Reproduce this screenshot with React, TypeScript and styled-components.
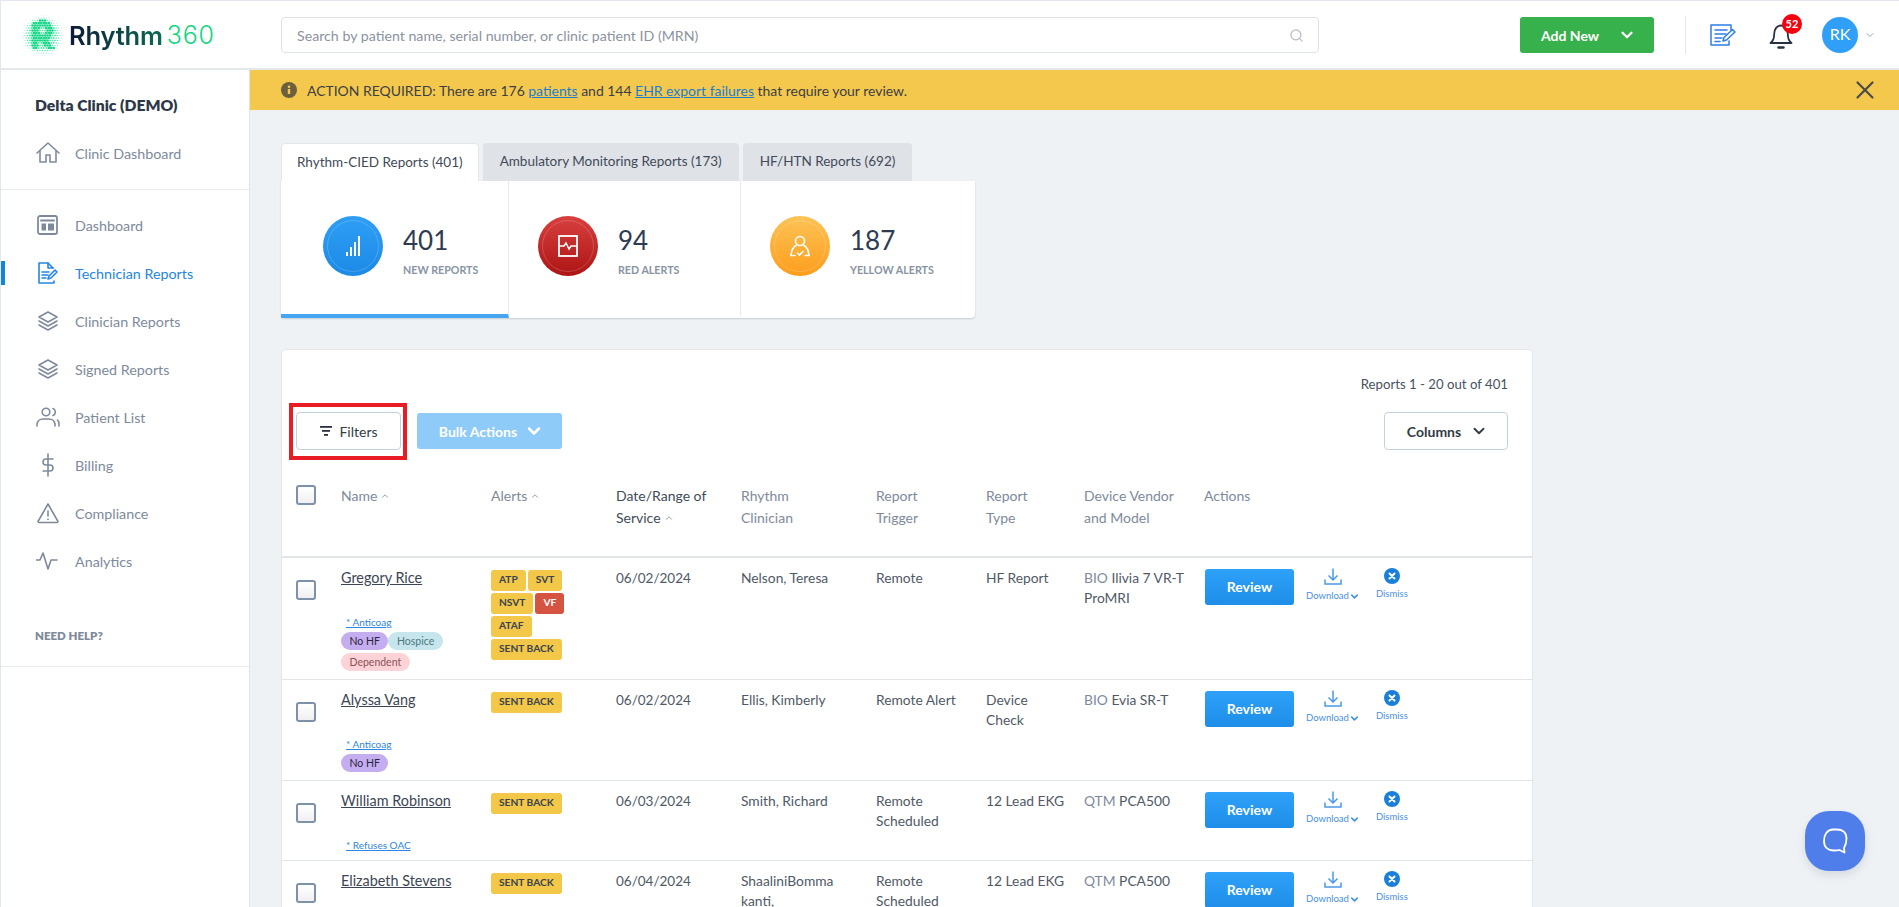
import React from "react";
import styled, { createGlobalStyle } from "styled-components";
import { Search, ChevronDown, ChevronUp, X } from "lucide-react";

const GlobalStyle = createGlobalStyle`
  html, body {
    margin: 0;
    height: 907px;
    overflow: hidden;
    background: #eff2f5;
    font-family: "Lato", "Liberation Sans", sans-serif;
    color: #3a4657;
  }
  * { box-sizing: border-box; }
`;

const Page = styled.div`
  display: flex;
  flex-direction: column;
  height: 907px;
  border-top: 1px solid #e2e6ee;
  border-left: 1px solid #e2e6ee;
`;

const TopBar = styled.header`
  flex: 0 0 69px;
  display: flex;
  align-items: center;
  background: #fff;
  border-bottom: 2px solid #e4e7ec;
  padding-top: 1px;
`;

const Brand = styled.div`
  width: 280px;
  padding-left: 21px;
  display: flex;
  align-items: center;
`;

const Wordmark = styled.span`
  margin-left: 6px;
  font-family: "Inter", sans-serif;
  font-size: 25.5px;
  letter-spacing: -0.2px;
  font-weight: 600;
  background: linear-gradient(90deg, #0c1a38, #0b6b52);
  -webkit-background-clip: text;
  background-clip: text;
  color: transparent;
`;

const WordmarkNum = styled.span`
  margin-left: 4px;
  font-family: "Inter", sans-serif;
  font-size: 25px;
  letter-spacing: 0.8px;
  font-weight: 300;
  color: #10d67f;
`;

const SearchBox = styled.div`
  width: 1038px;
  height: 36px;
  display: flex;
  align-items: center;
  justify-content: space-between;
  padding: 0 14px 0 15px;
  border: 1px solid #dfe3e9;
  border-radius: 4px;
  font-size: 14.2px;
  color: #8b93a0;
`;

const TopActions = styled.div`
  margin-left: 201px;
  display: flex;
  align-items: center;
`;

const AddNew = styled.div`
  width: 134px;
  height: 36px;
  display: flex;
  align-items: center;
  justify-content: center;
  gap: 19px;
  padding-left: 3px;
  border-radius: 3px;
  background: #36b14c;
  color: #fff;
  font-size: 14px;
  font-weight: 700;
`;

const VLine = styled.div`
  width: 1px;
  height: 38px;
  margin: 0 24px 0 31px;
  background: #e4e7ec;
`;

const BellWrap = styled.div`
  position: relative;
  margin-left: 33px;
  width: 26px;
  height: 30px;
`;

const Count = styled.span`
  position: absolute;
  top: -6px;
  left: 13px;
  width: 20px;
  height: 20px;
  border-radius: 50%;
  background: #f5000f;
  color: #fff;
  font-size: 11px;
  font-weight: 700;
  line-height: 20px;
  text-align: center;
`;

const Avatar = styled.div`
  margin-left: 27px;
  width: 36px;
  height: 36px;
  border-radius: 50%;
  background: #2f9ff8;
  color: #fff;
  font-size: 16px;
  line-height: 34px;
  text-align: center;
`;

const Body = styled.div`
  flex: 1;
  display: flex;
  min-height: 0;
`;

const Sidebar = styled.aside`
  flex: 0 0 249px;
  background: #fff;
  border-right: 1px solid #e0e3e8;
`;

const ClinicBlock = styled.div`
  height: 120px;
  padding-top: 25px;
  border-bottom: 1px solid #e8eaee;
`;

const ClinicName = styled.div`
  padding-left: 34px;
  height: 34px;
  font-size: 15.7px;
  font-weight: 800;
  color: #2d3748;
  line-height: 21px;
`;

const NavList = styled.nav`
  padding-top: 11px;
  height: 477px;
  border-bottom: 1px solid #e8eaee;
`;

const NavItem = styled.div<{ $active?: boolean }>`
  height: 48px;
  display: flex;
  align-items: center;
  gap: 15px;
  padding-left: 35px;
  font-size: 14.3px;
  color: ${({ $active }) => ($active ? "#2386e2" : "#7e8a9c")};
  position: relative;
  ${({ $active }) =>
    $active &&
    `&::before {
      content: "";
      position: absolute;
      left: 0;
      top: 12px;
      width: 4px;
      height: 24px;
      background: #1582dc;
    }`}
`;

const NavIcon = styled.svg`
  width: 24px;
  height: 24px;
  flex: none;
  fill: none;
  stroke: currentColor;
  stroke-width: 1.6;
  stroke-linecap: round;
  stroke-linejoin: round;
`;

const HelpLabel = styled.div`
  margin: 44px 0 0 34px;
  font-size: 11.5px;
  font-weight: 800;
  color: #7e8a9c;
`;

const Main = styled.main`
  flex: 1;
  min-width: 0;
  position: relative;
`;

const Banner = styled.div`
  height: 40px;
  display: flex;
  align-items: center;
  padding: 0 19px 0 31px;
  background: #f4c84c;
  font-size: 13.95px;
  color: #3c3f45;
`;

const BannerText = styled.span`
  margin-left: 10px;
  flex: 1;
`;

const BannerLink = styled.a`
  color: #1b7fd1;
  text-decoration: underline;
`;

const Content = styled.div`
  padding: 33px 0 0 31px;
  width: 1284px;
`;

const Tabs = styled.div`
  display: flex;
  gap: 4px;
`;

const Tab = styled.div<{ $active?: boolean }>`
  height: 38px;
  padding: 0 ${({ $active }) => ($active ? 15 : 17)}px 2px;
  display: flex;
  align-items: center;
  font-size: 13.5px;
  border-radius: 4px 4px 0 0;
  color: #3f4a5a;
  background: ${({ $active }) => ($active ? "#fff" : "#dfe2e6")};
  ${({ $active }) => $active && "border: 1px solid #e3e6ea; border-bottom: none;"}
`;

const StatCard = styled.section`
  width: 694px;
  height: 137px;
  display: flex;
  background: #fff;
  border-radius: 0 0 4px 4px;
  box-shadow: 0 1px 2px rgba(40, 50, 70, 0.2);
`;

const StatCell = styled.div<{ $width: number; $selected?: boolean }>`
  width: ${({ $width }) => $width}px;
  display: flex;
  align-items: flex-start;
  gap: 20px;
  padding: 35px 0 0 ${({ $selected }) => ($selected ? 42 : 29)}px;
  border-right: 1px solid #e8eaee;
  border-bottom: 4px solid ${({ $selected }) => ($selected ? "#46a6f1" : "transparent")};
  &:last-child { border-right: none; }
`;

const StatBadge = styled.div<{ $from: string; $to: string }>`
  width: 60px;
  height: 60px;
  border-radius: 50%;
  flex: none;
  display: flex;
  align-items: center;
  justify-content: center;
  background: linear-gradient(${({ $from }) => $from}, ${({ $to }) => $to});
  position: relative;
  color: #fff;
  &::after {
    content: "";
    position: absolute;
    inset: 4px;
    border-radius: 50%;
    border: 1.5px solid rgba(255, 255, 255, 0.18);
  }
`;

const StatNumber = styled.div`
  font-size: 26px;
  line-height: 30px;
  margin-top: 9px;
  color: #2f3b52;
`;

const StatLabel = styled.div`
  margin-top: 8px;
  font-size: 10.7px;
  font-weight: 700;
  color: #8893a3;
  white-space: nowrap;
`;

const TableCard = styled.section`
  margin-top: 31px;
  width: 1252px;
  background: #fff;
  border: 1px solid #e2e5e9;
  border-radius: 4px 4px 0 0;
`;

const CountLine = styled.div`
  padding: 26px 24px 0 0;
  text-align: right;
  font-size: 13.2px;
  line-height: 16px;
  color: #48525f;
`;

const Toolbar = styled.div`
  display: flex;
  align-items: flex-start;
  padding: 11px 24px 0 7px;
  height: 68px;
`;

const RedFrame = styled.div`
  border: 4px solid #e81c24;
  padding: 5px 2px 0 3px;
  width: 118px;
  height: 57px;
`;

const OutlineButton = styled.div`
  height: 38px;
  display: flex;
  align-items: center;
  justify-content: center;
  gap: 6px;
  border: 1px solid #c3d0df;
  border-radius: 4px;
  font-size: 14px;
  color: #333c48;
`;

const BulkButton = styled.div`
  margin: 10px 0 0 10px;
  width: 145px;
  height: 36px;
  display: flex;
  align-items: center;
  justify-content: center;
  gap: 7px;
  padding-left: 4px;
  border-radius: 3px;
  background: #8fcbf8;
  color: #fff;
  font-size: 14px;
  font-weight: 700;
`;

const ColumnsButton = styled(OutlineButton)`
  margin: 9px 0 0 auto;
  width: 124px;
  gap: 9px;
  padding-left: 3px;
  font-weight: 700;
`;

const columnsTemplate = "45px 150px 125px 125px 135px 110px 98px 120px 1fr";

const HeadRow = styled.div`
  display: grid;
  grid-template-columns: ${columnsTemplate};
  padding: 25px 0 0 14px;
  height: 98px;
  border-bottom: 2px solid #e1e4e8;
`;

const HeadCell = styled.div<{ $dark?: boolean }>`
  font-size: 14px;
  line-height: 22px;
  color: ${({ $dark }) => ($dark ? "#414b58" : "#7e8a9c")};
`;

const Row = styled.div<{ $height: number }>`
  display: grid;
  grid-template-columns: ${columnsTemplate};
  height: ${({ $height }) => $height}px;
  padding: 10px 0 0 14px;
  border-bottom: 1px solid #e1e4e8;
  font-size: 13.8px;
  line-height: 20px;
  color: #4f5966;
`;

const Checkbox = styled.div<{ $top?: number }>`
  width: 20px;
  height: 20px;
  margin-top: ${({ $top }) => $top ?? 0}px;
  border: 2px solid #7d92aa;
  border-radius: 3px;
  background: linear-gradient(#fff, #f0f0f2);
`;

const NameCell = styled.div`
  display: flex;
  flex-direction: column;
  align-items: flex-start;
`;

const PatientName = styled.a`
  color: #3c4656;
  font-size: 14.4px;
  line-height: 20px;
  text-decoration: underline;
`;

const Note = styled.a`
  margin: 28px 0 0 5px;
  color: #2d86e0;
  font-size: 10px;
  line-height: 12px;
  text-decoration: underline;
`;

const Pills = styled.div`
  margin-top: 4px;
  width: 110px;
  display: flex;
  flex-wrap: wrap;
  row-gap: 3px;
`;

const Pill = styled.span<{ $bg: string; $fg: string }>`
  height: 18px;
  padding: 0 8.5px;
  border-radius: 9px;
  font-size: 10.5px;
  line-height: 18px;
  white-space: nowrap;
  background: ${({ $bg }) => $bg};
  color: ${({ $fg }) => $fg};
`;

const AlertList = styled.div`
  width: 74px;
  display: flex;
  flex-wrap: wrap;
  align-content: flex-start;
  gap: 2px;
  margin-top: 2px;
`;

const AlertTag = styled.span<{ $red?: boolean }>`
  height: 21px;
  padding: 0 8px;
  border-radius: 3px;
  font-size: 10.2px;
  line-height: 19px;
  font-weight: 700;
  white-space: nowrap;
  background: ${({ $red }) => ($red ? "#d55441" : "#f3c748")};
  color: ${({ $red }) => ($red ? "#fff" : "#3a4350")};
`;

const DateText = styled.div`
  font-size: 13.5px;
`;

const Vendor = styled.span`
  color: #7e8a9c;
`;

const ActionCell = styled.div`
  display: flex;
  align-items: flex-start;
  padding-left: 1px;
`;

const ReviewButton = styled.div`
  width: 89px;
  height: 36px;
  margin-top: 1px;
  flex: none;
  border-radius: 3px;
  background: linear-gradient(#2ea1f9, #1e8ee9);
  color: #fff;
  font-size: 14px;
  font-weight: 700;
  line-height: 36px;
  text-align: center;
`;

const MiniAction = styled.div<{ $left: number }>`
  margin-left: ${({ $left }) => $left}px;
  display: flex;
  flex-direction: column;
  align-items: center;
  font-size: 9.5px;
  line-height: 12px;
  color: #4a90e2;
`;

const MiniLabel = styled.span`
  display: flex;
  align-items: center;
  margin-top: 4px;
`;

const ChatBubble = styled.div`
  position: absolute;
  right: 34px;
  bottom: 36px;
  width: 60px;
  height: 60px;
  border-radius: 24px;
  background: #4f7eea;
  box-shadow: 0 4px 10px rgba(60, 80, 120, 0.15);
  display: flex;
  align-items: center;
  justify-content: center;
`;

const logoDots = (() => {
  const inR = (x: number, y: number) => {
    if (x >= 10 && x <= 16 && y >= 6 && y <= 34) return true;
    const d = Math.hypot(x - 20, y - 15);
    if (x >= 14 && y >= 5 && y <= 25 && d < 10.5 && d > 4) return true;
    const leg = x - y * 0.8;
    if (y >= 22 && y <= 34 && leg > -2 && leg < 6) return true;
    return false;
  };
  const dots: { x: number; y: number; r: number; fill: string }[] = [];
  for (let j = 0; j < 17; j++) {
    for (let i = 0; i < 17; i++) {
      const x = i * 2.5 + (j % 2 ? 1.25 : 0);
      const y = j * 2.5;
      const d = Math.hypot(x - 20, y - 20);
      if (d > 20.5) continue;
      if (inR(x, y)) {
        dots.push({ x, y, r: 1.3, fill: "#14d684" });
      } else {
        const r = d < 13 ? 0.95 : Math.max(0.3, 0.95 - (d - 13) * 0.09);
        dots.push({ x, y, r, fill: "#4deaa8" });
      }
    }
  }
  return dots;
})();

const LogoMark = () => (
  <svg width="41" height="41" viewBox="-0.5 -0.5 41 41">
    {logoDots.map((c) => (
      <circle key={`${c.x}-${c.y}`} cx={c.x} cy={c.y} r={c.r} fill={c.fill} />
    ))}
  </svg>
);

const NotesIcon = () => (
  <svg width="26" height="24" viewBox="0 0 26 24" fill="none" stroke="#2d7fe8" strokeWidth="1.5" strokeLinecap="round" strokeLinejoin="round">
    <path d="M21 7V2H1v20h18v-4" />
    <path d="M5 7h12M5 11h11M5 15h7M5 18.500h5" />
    <path d="M13 18l1-3.500 8.500-8 2.500 2.500-8.500 8z" />
  </svg>
);

const BellIcon = () => (
  <svg width="24" height="30" viewBox="0 0 24 30" fill="none" stroke="#2a3240" strokeWidth="1.8" strokeLinejoin="round" strokeLinecap="round">
    <path d="M1.500 23c2.800-2 3.700-4 3.700-9 0-5 2.800-8.500 6.800-8.500s6.800 3.500 6.800 8.500c0 5 .900 7 3.700 9z" />
    <path d="M9.500 27.500h5" strokeWidth="2.400" />
  </svg>
);

const FilterIcon = () => (
  <svg width="14" height="12" viewBox="0 0 14 12" fill="#2b3340">
    <rect x="1" y="1" width="12" height="1.800" />
    <rect x="3" y="5" width="8" height="1.800" />
    <rect x="5" y="9" width="4" height="1.800" />
  </svg>
);

const DownloadIcon = () => (
  <svg width="18" height="18" viewBox="0 0 18 18" fill="none" stroke="#4a9ae8" strokeWidth="1.500">
    <path d="M9 0.500v11M4.500 7.500L9 12l4.500-4.500" />
    <path d="M1 11.500v4.500h16v-4.500" />
  </svg>
);

const DismissIcon = () => (
  <svg width="16" height="16" viewBox="0 0 16 16">
    <circle cx="8" cy="8" r="8" fill="#1a7fd8" />
    <path d="M5.500 5.500l5 5M10.500 5.500l-5 5" stroke="#fff" strokeWidth="2" strokeLinecap="round" />
  </svg>
);

const BarsIcon = () => (
  <svg width="14" height="20" viewBox="0 0 14 20" fill="#fff">
    <rect x="0" y="16" width="2" height="4" />
    <rect x="4" y="11" width="2" height="9" />
    <rect x="8" y="6" width="2" height="14" />
    <rect x="12" y="0" width="2" height="20" />
  </svg>
);

const RedAlertIcon = () => (
  <svg width="20" height="22" viewBox="0 0 20 22" fill="none" stroke="#fff" strokeWidth="1.800">
    <rect x="1" y="1" width="18" height="20" />
    <path d="M1 11h5l2-3 3 6 2-3h6" strokeWidth="1.400" />
  </svg>
);

const YellowAlertIcon = () => (
  <svg width="20" height="22" viewBox="0 0 20 22" fill="none" stroke="#fff" strokeWidth="1.600" strokeLinecap="round">
    <circle cx="10" cy="6" r="4.500" />
    <path d="M6 10.500C3 12 1.500 15 1 20.500h4M14 10.500c3 1.500 4.500 4.500 5 10h-4" />
    <path d="M7.500 18l2 2 3.500-3.500" />
  </svg>
);

const InfoIcon = () => (
  <svg width="16" height="16" viewBox="0 0 16 16">
    <circle cx="8" cy="8" r="8" fill="#6b5f3f" />
    <rect x="6.800" y="7" width="2.400" height="5" fill="#f4c84c" />
    <circle cx="8" cy="4.700" r="1.300" fill="#f4c84c" />
  </svg>
);

const navIcons: Record<string, React.ReactNode> = {
  home: (
    <>
      <path d="M1 12L12 2l11 10" />
      <path d="M4 10v11h6v-7h4v7h6V10" />
    </>
  ),
  dash: (
    <>
      <rect x="2" y="3" width="19" height="18" rx="2" strokeWidth="1.800" />
      <path d="M5 7.500h13" strokeWidth="2" />
      <rect x="5.500" y="10.500" width="4.500" height="7" fill="currentColor" stroke="none" />
      <rect x="12" y="10.500" width="6" height="7" fill="currentColor" stroke="none" />
    </>
  ),
  report: (
    <>
      <path d="M18 20v2H3V2h9l5 5" />
      <path d="M12 2v5h5" />
      <path d="M6 11h7M6 14h6M6 17h4" />
      <path d="M12 18l1-3 6-6 2 2-6 6z" />
    </>
  ),
  stack: (
    <>
      <path d="M12 3l9 5-9 5-9-5z" />
      <path d="M3 12l9 5 9-5" />
      <path d="M3 16l9 5 9-5" />
    </>
  ),
  people: (
    <>
      <circle cx="10" cy="7" r="3.800" />
      <path d="M1 21v-2a6 6 0 0 1 6-5h6a6 6 0 0 1 6 5v2" />
      <path d="M17 3.500a3.800 3.800 0 0 1 0 7" />
      <path d="M21.500 15a6 6 0 0 1 1.500 4v2" />
    </>
  ),
  dollar: (
    <>
      <path d="M12 1v22" />
      <path d="M17 6h-7a3 3 0 0 0 0 6h4a3 3 0 0 1 0 6H7" />
    </>
  ),
  warn: (
    <>
      <path d="M12 3L2 20.500a1 1 0 0 0 1 1h18a1 1 0 0 0 1-1z" />
      <path d="M12 10v5M12 18v.500" />
    </>
  ),
  pulse: <path d="M0 11h4l3-7 5 16 3-9h6" />,
};

const navItems = [
  { label: "Dashboard", icon: "dash" },
  { label: "Technician Reports", icon: "report", active: true },
  { label: "Clinician Reports", icon: "stack" },
  { label: "Signed Reports", icon: "stack" },
  { label: "Patient List", icon: "people" },
  { label: "Billing", icon: "dollar" },
  { label: "Compliance", icon: "warn" },
  { label: "Analytics", icon: "pulse" },
];

type Patient = {
  name: string;
  note: string;
  pills: { text: string; bg: string; fg: string }[];
  alerts: { text: string; red?: boolean }[];
  date: string;
  clinician: string[];
  trigger: string[];
  type: string[];
  vendor: string;
  model: string[];
  height: number;
};

const noHf = { text: "No HF", bg: "#c5aef0", fg: "#2a2440" };
const sentBack = { text: "SENT BACK" };

const patients: Patient[] = [
  {
    name: "Gregory Rice",
    note: "* Anticoag",
    pills: [
      noHf,
      { text: "Hospice", bg: "#c7e5ec", fg: "#4c7a82" },
      { text: "Dependent", bg: "#fdd3d7", fg: "#8a5258" },
    ],
    alerts: [
      { text: "ATP" },
      { text: "SVT" },
      { text: "NSVT" },
      { text: "VF", red: true },
      { text: "ATAF" },
      sentBack,
    ],
    date: "06/02/2024",
    clinician: ["Nelson, Teresa"],
    trigger: ["Remote"],
    type: ["HF Report"],
    vendor: "BIO",
    model: ["Ilivia 7 VR-T", "ProMRI"],
    height: 122,
  },
  {
    name: "Alyssa Vang",
    note: "* Anticoag",
    pills: [noHf],
    alerts: [sentBack],
    date: "06/02/2024",
    clinician: ["Ellis, Kimberly"],
    trigger: ["Remote Alert"],
    type: ["Device", "Check"],
    vendor: "BIO",
    model: ["Evia SR-T"],
    height: 101,
  },
  {
    name: "William Robinson",
    note: "* Refuses OAC",
    pills: [],
    alerts: [sentBack],
    date: "06/03/2024",
    clinician: ["Smith, Richard"],
    trigger: ["Remote", "Scheduled"],
    type: ["12 Lead EKG"],
    vendor: "QTM",
    model: ["PCA500"],
    height: 80,
  },
  {
    name: "Elizabeth Stevens",
    note: "",
    pills: [],
    alerts: [sentBack],
    date: "06/04/2024",
    clinician: ["ShaaliniBomma", "kanti,"],
    trigger: ["Remote", "Scheduled"],
    type: ["12 Lead EKG"],
    vendor: "QTM",
    model: ["PCA500"],
    height: 80,
  },
];

const Lines = ({ items }: { items: string[] }) => (
  <div>
    {items.map((line) => (
      <div key={line}>{line}</div>
    ))}
  </div>
);

const SortMark = () => <ChevronUp size={10} color="#7e8a9c" style={{ marginLeft: 3 }} />;

export default function App() {
  return (
    <>
      <GlobalStyle />
      <Page>
        <TopBar>
          <Brand>
            <LogoMark />
            <Wordmark>Rhythm</Wordmark>
            <WordmarkNum>360</WordmarkNum>
          </Brand>
          <SearchBox>
            Search by patient name, serial number, or clinic patient ID (MRN)
            <Search size={15} color="#b6bcc6" />
          </SearchBox>
          <TopActions>
            <AddNew>
              Add New
              <ChevronDown size={18} strokeWidth={3} />
            </AddNew>
            <VLine />
            <NotesIcon />
            <BellWrap>
              <BellIcon />
              <Count>52</Count>
            </BellWrap>
            <Avatar>RK</Avatar>
            <ChevronDown size={12} color="#a0a6b0" style={{ marginLeft: 6 }} />
          </TopActions>
        </TopBar>
        <Body>
          <Sidebar>
            <ClinicBlock>
              <ClinicName>Delta Clinic (DEMO)</ClinicName>
              <NavItem>
                <NavIcon viewBox="0 0 24 24">{navIcons.home}</NavIcon>
                Clinic Dashboard
              </NavItem>
            </ClinicBlock>
            <NavList>
              {navItems.map((item) => (
                <NavItem key={item.label} $active={item.active}>
                  <NavIcon viewBox="0 0 24 24">{navIcons[item.icon]}</NavIcon>
                  {item.label}
                </NavItem>
              ))}
              <HelpLabel>NEED HELP?</HelpLabel>
            </NavList>
          </Sidebar>
          <Main>
            <Banner>
              <InfoIcon />
              <BannerText>
                ACTION REQUIRED: There are 176 <BannerLink>patients</BannerLink> and 144{" "}
                <BannerLink>EHR export failures</BannerLink> that require your review.
              </BannerText>
              <X size={30} strokeWidth={1.7} color="#4a4a48" />
            </Banner>
            <Content>
              <Tabs>
                <Tab $active>Rhythm-CIED Reports (401)</Tab>
                <Tab>Ambulatory Monitoring Reports (173)</Tab>
                <Tab>HF/HTN Reports (692)</Tab>
              </Tabs>
              <StatCard>
                <StatCell $width={228} $selected>
                  <StatBadge $from="#2e9ef5" $to="#1c8ae6">
                    <BarsIcon />
                  </StatBadge>
                  <div>
                    <StatNumber>401</StatNumber>
                    <StatLabel>NEW REPORTS</StatLabel>
                  </div>
                </StatCell>
                <StatCell $width={232}>
                  <StatBadge $from="#d8403f" $to="#ad1414">
                    <RedAlertIcon />
                  </StatBadge>
                  <div>
                    <StatNumber>94</StatNumber>
                    <StatLabel>RED ALERTS</StatLabel>
                  </div>
                </StatCell>
                <StatCell $width={234}>
                  <StatBadge $from="#fcc356" $to="#fd9d1c">
                    <YellowAlertIcon />
                  </StatBadge>
                  <div>
                    <StatNumber>187</StatNumber>
                    <StatLabel>YELLOW ALERTS</StatLabel>
                  </div>
                </StatCell>
              </StatCard>
              <TableCard>
                <CountLine>Reports 1 - 20 out of 401</CountLine>
                <Toolbar>
                  <RedFrame>
                    <OutlineButton>
                      <FilterIcon />
                      Filters
                    </OutlineButton>
                  </RedFrame>
                  <BulkButton>
                    Bulk Actions
                    <ChevronDown size={20} strokeWidth={3} />
                  </BulkButton>
                  <ColumnsButton>
                    Columns
                    <ChevronDown size={18} strokeWidth={2.5} />
                  </ColumnsButton>
                </Toolbar>
                <HeadRow>
                  <Checkbox />
                  <HeadCell>
                    Name
                    <SortMark />
                  </HeadCell>
                  <HeadCell>
                    Alerts
                    <SortMark />
                  </HeadCell>
                  <HeadCell $dark>
                    Date/Range of
                    <br />
                    Service
                    <SortMark />
                  </HeadCell>
                  <HeadCell>
                    Rhythm
                    <br />
                    Clinician
                  </HeadCell>
                  <HeadCell>
                    Report
                    <br />
                    Trigger
                  </HeadCell>
                  <HeadCell>
                    Report
                    <br />
                    Type
                  </HeadCell>
                  <HeadCell>
                    Device Vendor
                    <br />
                    and Model
                  </HeadCell>
                  <HeadCell>Actions</HeadCell>
                </HeadRow>
                {patients.map((p) => (
                  <Row key={p.name} $height={p.height}>
                    <Checkbox $top={12} />
                    <NameCell>
                      <PatientName>{p.name}</PatientName>
                      {p.note && <Note>{p.note}</Note>}
                      {p.pills.length > 0 && (
                        <Pills>
                          {p.pills.map((pill) => (
                            <Pill key={pill.text} $bg={pill.bg} $fg={pill.fg}>
                              {pill.text}
                            </Pill>
                          ))}
                        </Pills>
                      )}
                    </NameCell>
                    <AlertList>
                      {p.alerts.map((a) => (
                        <AlertTag key={a.text} $red={a.red}>
                          {a.text}
                        </AlertTag>
                      ))}
                    </AlertList>
                    <DateText>{p.date}</DateText>
                    <Lines items={p.clinician} />
                    <Lines items={p.trigger} />
                    <Lines items={p.type} />
                    <div>
                      <Vendor>{p.vendor}</Vendor> {p.model[0]}
                      {p.model[1] && <div>{p.model[1]}</div>}
                    </div>
                    <ActionCell>
                      <ReviewButton>Review</ReviewButton>
                      <MiniAction $left={12}>
                        <DownloadIcon />
                        <MiniLabel>
                          Download
                          <ChevronDown size={11} strokeWidth={3.5} />
                        </MiniLabel>
                      </MiniAction>
                      <MiniAction $left={16}>
                        <DismissIcon />
                        <MiniLabel>Dismiss</MiniLabel>
                      </MiniAction>
                    </ActionCell>
                  </Row>
                ))}
              </TableCard>
            </Content>
            <ChatBubble>
              <svg width="26" height="26" viewBox="0 0 26 26" fill="none" stroke="#fff" strokeWidth="1.800" strokeLinejoin="round">
                <path d="M11 1.500h4c5.500 0 9.500 3 9.500 9 0 4-1 7-2.500 9.500l.5 4.500-5-2.500c-1.500.500-3 .500-6 .500-5.500 0-9.500-3-9.500-9.500S5.500 1.500 11 1.500z" />
              </svg>
            </ChatBubble>
          </Main>
        </Body>
      </Page>
    </>
  );
}
